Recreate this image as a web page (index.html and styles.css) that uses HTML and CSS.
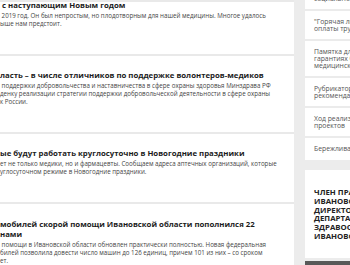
FILE: index.html
```html
<!DOCTYPE html>
<html lang="ru">
<head>
    <meta charset="UTF-8">
    <meta name="viewport" content="width=device-width, initial-scale=1.0">
    <title>Новости</title>
    <link rel="stylesheet" href="styles.css">
</head>
<body>
    <div class="top-shadow"></div>
    <div class="page">
        <main class="news">
            <article class="news-item">
                <h2 class="news-title">&nbsp;с наступающим Новым годом</h2>
                <p class="news-text">&nbsp;2019 год. Он был непростым, но плодотворным для нашей медицины. Многое удалось<br>ыше нам предстоит.</p>
            </article>
            <article class="news-item">
                <h2 class="news-title">ласть – в числе отличников по поддержке волонтеров-медиков</h2>
                <p class="news-text">&nbsp;поддержки добровольчества и наставничества в сфере охраны здоровья Минздрава РФ<br>денку реализации стратегии поддержки добровольческой деятельности в сфере охраны<br>к России.</p>
            </article>
            <article class="news-item">
                <h2 class="news-title">ые будут работать круглосуточно в Новогодние праздники</h2>
                <p class="news-text">ет не только медики, но и фармацевты. Сообщаем адреса аптечных организаций, которые<br>углосуточном режиме в Новогодние праздники.</p>
            </article>
            <article class="news-item">
                <h2 class="news-title">мобилей скорой помощи Ивановской области пополнился 22<br>нами</h2>
                <p class="news-text">&nbsp;помощи в Ивановской области обновлен практически полностью. Новая федеральная<br>билей позволила довести число машин до 126 единиц, причем 101 из них – со сроком<br>ет.</p>
            </article>
        </main>

        <aside class="aside">
            <nav class="links">
                <a href="#">Стандарты оказания медицинской и<br>социальной помощи</a>
                <a href="#">"Горячая линия" по вопросам<br>оплаты труда медработников</a>
                <a href="#">Памятка для граждан о<br>гарантиях бесплатного оказания<br>медицинской помощи</a>
                <a href="#">Рубрикатор клинических<br>рекомендаций</a>
                <a href="#">Ход реализации приоритетных<br>проектов</a>
                <a href="#">Бережливая поликлиника</a>
            </nav>
            <div class="person">
                <p class="person-title">Член правительства<br>Ивановской области -<br>директор<br>департамента<br>здравоохранения<br>Ивановской области</p>
            </div>
            <div class="banner"></div>
        </aside>
    </div>
</body>
</html>
```

FILE: styles.css
```css
* {
    box-sizing: border-box;
    margin: 0;
    padding: 0;
}

body {
    font-family: 'Open Sans', sans-serif;
    background-color: #ececec;
    width: 350px;
    height: 265px;
    overflow: hidden;
}

.top-shadow {
    position: fixed;
    top: 0;
    left: 0;
    width: 294px;
    height: 2px;
    background-color: #e9e9e9;
}

.page {
    display: flex;
    align-items: flex-start;
    gap: 11px;
    width: 520px;
}

.news {
    width: 294px;
    flex-shrink: 0;
    background-color: #fff;
    margin-top: -14px;
}

.news-item {
    padding: 14px 0 26px;
    border-bottom: 2px solid #e9e9e9;
}

.news-item:last-child {
    padding-top: 15px;
}

.news-title {
    font-size: 7.8px;
    line-height: 10px;
    font-weight: 700;
    color: #1c1c1c;
    white-space: nowrap;
}

.news-text {
    margin-top: 2px;
    font-size: 6.2px;
    line-height: 8px;
    color: #444;
    white-space: nowrap;
}

.aside {
    width: 200px;
    flex-shrink: 0;
    display: flex;
    flex-direction: column;
}

.links {
    background-color: #fff;
    margin-top: -19px;
}

.links a {
    display: block;
    padding: 7px 9px;
    border-bottom: 2px solid #ebebeb;
    font-size: 6.8px;
    line-height: 7px;
    color: #555;
    text-decoration: none;
    white-space: nowrap;
}

.links a:last-child {
    border-bottom: none;
    padding-bottom: 8px;
}

.person {
    margin-top: 10px;
    background-color: #fff;
    padding: 18px 9px 17px;
}

.person-title {
    font-size: 7.8px;
    line-height: 8.8px;
    font-weight: 700;
    color: #222;
    text-transform: uppercase;
    white-space: nowrap;
}

.banner {
    margin-top: 3px;
    height: 20px;
    background-color: #585858;
}
```
